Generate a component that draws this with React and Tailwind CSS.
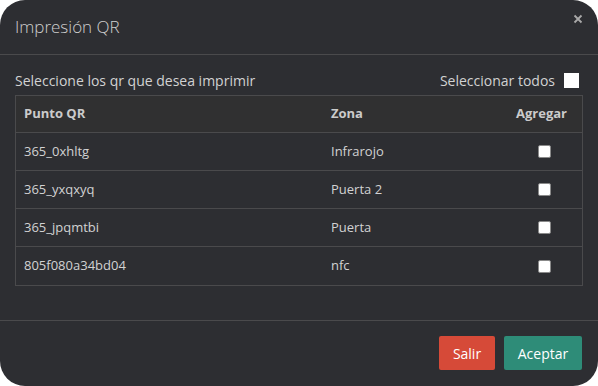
import React from "react";

const rows = [
  { id: "365_0xhltg", zona: "Infrarojo" },
  { id: "365_yxqxyq", zona: "Puerta 2" },
  { id: "365_jpqmtbi", zona: "Puerta" },
  { id: "805f080a34bd04", zona: "nfc" },
];

export default function App() {
  return (
    <div className="w-[598px] h-[386px] bg-white" style={{ fontFamily: '"Open Sans", sans-serif' }}>
      <div className="w-full h-full bg-[#2d2e32] rounded-[25px] overflow-hidden flex flex-col text-[#d2d2d2]">
        <div className="h-[55px] shrink-0 border-b border-[#4a4a4c] flex items-center justify-between pl-[15px] pr-[15px]">
          <div className="text-[17px] font-light text-[#cfcfcf] leading-none -mt-[1px]">Impresión QR</div>
          <svg width="10" height="10" viewBox="0 0 10 10" className="-mt-[16px] mr-[0px]">
            <path d="M1.5 1.5 L8.5 8.5 M8.5 1.5 L1.5 8.5" stroke="#a9a9a9" strokeWidth="1.8" />
          </svg>
        </div>
        <div className="flex-1 px-[15px] pt-[17px]">
          <div className="h-[16px] flex items-center justify-between text-[14px]">
            <span>Seleccione los qr que desea imprimir</span>
            <div className="flex items-center gap-[9px] mr-[4px]">
              <span>Seleccionar todos</span>
              <div className="w-[15px] h-[15px] bg-white" />
            </div>
          </div>
          <div className="mt-[7px] border border-[#4a4a4c] text-[13px]">
            <div className="grid grid-cols-[307px_177px_1fr] h-[37px] items-center bg-[#303031] font-bold text-[#cbcbcb] border-b border-[#4a4a4c]">
              <div className="pl-[8px]">Punto QR</div>
              <div className="pl-[8px]">Zona</div>
              <div className="text-right pr-[15px]">Agregar</div>
            </div>
            {rows.map((r, i) => (
              <div
                key={r.id}
                className={`grid grid-cols-[307px_177px_1fr] h-[38px] items-center ${i < rows.length - 1 ? "border-b border-[#4a4a4c]" : ""}`}
              >
                <div className="pl-[8px]">{r.id}</div>
                <div className="pl-[8px]">{r.zona}</div>
                <div className="flex justify-end pr-[31px]">
                  <div className="w-[13px] h-[13px] bg-white rounded-[2px] border border-[#8a8a8a]" />
                </div>
              </div>
            ))}
          </div>
        </div>
        <div className="h-[66px] shrink-0 border-t border-[#4a4a4c] flex items-start justify-end gap-[9px] pt-[15px] pr-[16px]">
          <button className="h-[34px] w-[56px] bg-[#d64a38] text-white text-[14px] rounded-[2px]">Salir</button>
          <button className="h-[34px] w-[78px] bg-[#2e8c78] text-white text-[14px] rounded-[2px]">Aceptar</button>
        </div>
      </div>
    </div>
  );
}
